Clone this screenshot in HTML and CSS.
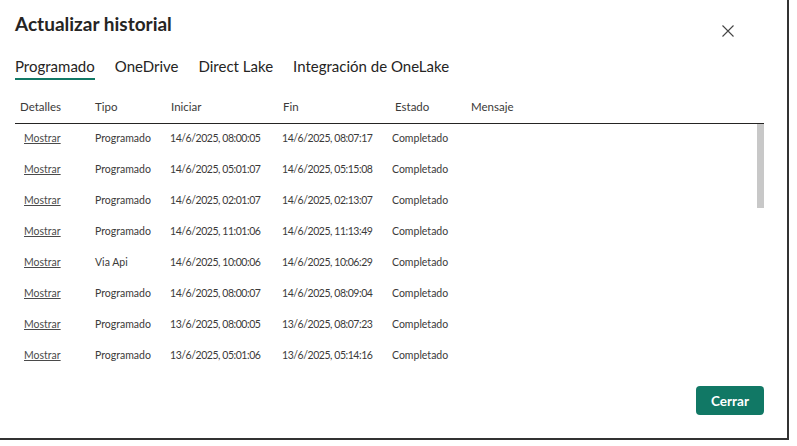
FILE: index.html
```html
<!DOCTYPE html>
<html lang="es">
<head>
<meta charset="utf-8">
<link rel="stylesheet" href="styles.css">
</head>
<body>
<div class="dialog">
  <div class="title-row">
    <h1 class="title">Actualizar historial</h1>
    <button class="close" aria-label="Cerrar">
      <svg width="12" height="12" viewBox="0 0 12 12"><path d="M0.5 0.5 L11.5 11.5 M11.5 0.5 L0.5 11.5" stroke="#444" stroke-width="1.1" fill="none"/></svg>
    </button>
  </div>
  <div class="tabs">
    <span class="tab active">Programado</span>
    <span class="tab">OneDrive</span>
    <span class="tab">Direct Lake</span>
    <span class="tab">Integración de OneLake</span>
  </div>
  <div class="table">
    <div class="thead">
      <span class="c1">Detalles</span><span class="c2">Tipo</span><span class="c3">Iniciar</span><span class="c4">Fin</span><span class="c5">Estado</span><span class="c6">Mensaje</span>
    </div>
    <div class="tbody-wrap">
      <div class="tbody">
        <div class="row"><a class="c1 link">Mostrar</a><span class="c2">Programado</span><span class="c3 date">14/6/2025, 08:00:05</span><span class="c4 date">14/6/2025, 08:07:17</span><span class="c5">Completado</span><span class="c6"></span></div>
        <div class="row"><a class="c1 link">Mostrar</a><span class="c2">Programado</span><span class="c3 date">14/6/2025, 05:01:07</span><span class="c4 date">14/6/2025, 05:15:08</span><span class="c5">Completado</span><span class="c6"></span></div>
        <div class="row"><a class="c1 link">Mostrar</a><span class="c2">Programado</span><span class="c3 date">14/6/2025, 02:01:07</span><span class="c4 date">14/6/2025, 02:13:07</span><span class="c5">Completado</span><span class="c6"></span></div>
        <div class="row"><a class="c1 link">Mostrar</a><span class="c2">Programado</span><span class="c3 date">14/6/2025, 11:01:06</span><span class="c4 date">14/6/2025, 11:13:49</span><span class="c5">Completado</span><span class="c6"></span></div>
        <div class="row"><a class="c1 link">Mostrar</a><span class="c2">Via Api</span><span class="c3 date">14/6/2025, 10:00:06</span><span class="c4 date">14/6/2025, 10:06:29</span><span class="c5">Completado</span><span class="c6"></span></div>
        <div class="row"><a class="c1 link">Mostrar</a><span class="c2">Programado</span><span class="c3 date">14/6/2025, 08:00:07</span><span class="c4 date">14/6/2025, 08:09:04</span><span class="c5">Completado</span><span class="c6"></span></div>
        <div class="row"><a class="c1 link">Mostrar</a><span class="c2">Programado</span><span class="c3 date">13/6/2025, 08:00:05</span><span class="c4 date">13/6/2025, 08:07:23</span><span class="c5">Completado</span><span class="c6"></span></div>
        <div class="row"><a class="c1 link">Mostrar</a><span class="c2">Programado</span><span class="c3 date">13/6/2025, 05:01:06</span><span class="c4 date">13/6/2025, 05:14:16</span><span class="c5">Completado</span><span class="c6"></span></div>
      </div>
      <div class="scrollbar"><div class="thumb"></div></div>
    </div>
  </div>
  <div class="footer">
    <button class="primary">Cerrar</button>
  </div>
</div>
</body>
</html>
```
FILE: styles.css
```css
* { box-sizing: border-box; }
html, body { margin: 0; padding: 0; background: #fff; }
body { font-family: "Lato", "Open Sans", sans-serif; color: #252423; width: 797px; height: 446px; overflow: hidden; }

.dialog {
  width: 789px;
  height: 440px;
  border-right: 2px solid #333;
  border-bottom: 2px solid #333;
  padding: 9px 23px 0 15px;
  display: flex;
  flex-direction: column;
}

.title-row { display: flex; justify-content: space-between; align-items: flex-start; }
.title { margin: 0; font-size: 19px; font-weight: 700; line-height: 30px; color: #252423; }
.close { border: 0; background: none; padding: 0; margin: 16px 30px 0 0; width: 12px; height: 12px; display: flex; }

.tabs { display: flex; gap: 20px; margin-top: 17px; height: 24px; }
.tab { font-size: 15px; line-height: 20px; color: #252423; height: 24px; }
.tab.active { border-bottom: 2px solid #117865; }

.table { margin-top: 10px; width: 749px; }
.thead, .row { display: grid; grid-template-columns: 75px 76px 112px 112px 76px 1fr; align-items: center; }
.thead { height: 34px; border-bottom: 1px solid #252423; font-size: 11.5px; color: #3b3a39; }
.thead span { padding-left: 5px; }

.tbody-wrap { display: flex; height: 239px; overflow: hidden; }
.tbody { flex: 1; margin-top: -2px; }
.row { height: 31px; font-size: 10.5px; color: #3b3a39; }
.row span { padding-left: 5px; }
.row .c3, .row .c4 { padding-left: 4px; }
.row .c5 { padding-left: 2px; }
.row .date { letter-spacing: -0.45px; }
.link { padding-left: 9px; color: #4a4a4a; text-decoration: underline; }

.scrollbar { width: 7px; height: 84px; }
.thumb { width: 7px; height: 84px; background: #c8c8c8; }

.footer { display: flex; justify-content: flex-end; margin-top: 23px; }
.primary {
  width: 68px; height: 29px; border: 0; border-radius: 4px;
  background: #117865; color: #fff;
  font-family: "Lato", "Open Sans", sans-serif; font-size: 13.5px; font-weight: 700;
}
```
